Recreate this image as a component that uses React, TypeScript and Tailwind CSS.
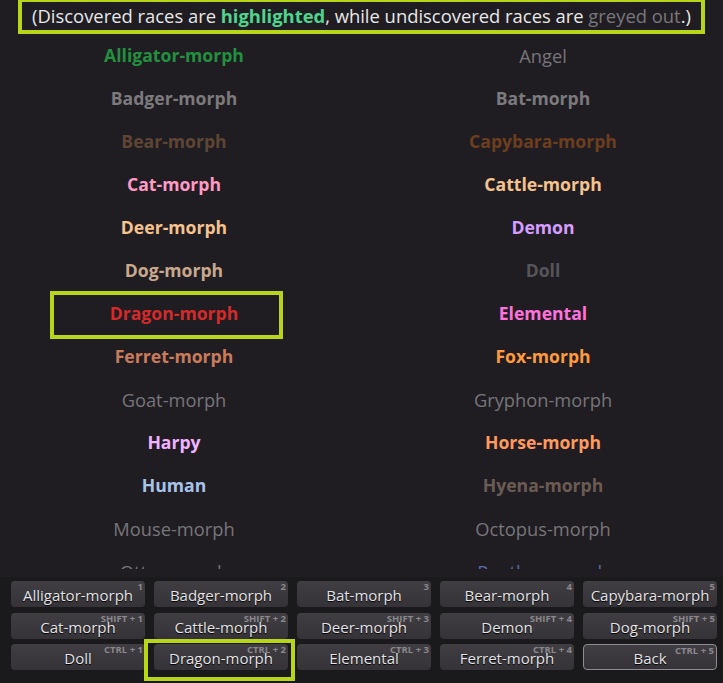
import React from "react";

type Race = { name: string; color: string; bold: boolean };

const left: Race[] = [
  { name: "Alligator-morph", color: "text-[#22903f]", bold: true },
  { name: "Badger-morph", color: "text-[#7c7a7c]", bold: true },
  { name: "Bear-morph", color: "text-[#5e4534]", bold: true },
  { name: "Cat-morph", color: "text-[#ff9ac4]", bold: true },
  { name: "Deer-morph", color: "text-[#f6c28e]", bold: true },
  { name: "Dog-morph", color: "text-[#c9a88d]", bold: true },
  { name: "Dragon-morph", color: "text-[#d42a2a]", bold: true },
  { name: "Ferret-morph", color: "text-[#c97b5b]", bold: true },
  { name: "Goat-morph", color: "text-[#777579]", bold: false },
  { name: "Harpy", color: "text-[#f2b2ff]", bold: true },
  { name: "Human", color: "text-[#a7c3ea]", bold: true },
  { name: "Mouse-morph", color: "text-[#777579]", bold: false },
  { name: "Otter-morph", color: "text-[#777579]", bold: false },
];

const right: Race[] = [
  { name: "Angel", color: "text-[#777579]", bold: false },
  { name: "Bat-morph", color: "text-[#7c7a7c]", bold: true },
  { name: "Capybara-morph", color: "text-[#6d3d1f]", bold: true },
  { name: "Cattle-morph", color: "text-[#f6c28e]", bold: true },
  { name: "Demon", color: "text-[#d79cff]", bold: true },
  { name: "Doll", color: "text-[#565458]", bold: true },
  { name: "Elemental", color: "text-[#ff72dc]", bold: true },
  { name: "Fox-morph", color: "text-[#ff9a3d]", bold: true },
  { name: "Gryphon-morph", color: "text-[#777579]", bold: false },
  { name: "Horse-morph", color: "text-[#ff9a5e]", bold: true },
  { name: "Hyena-morph", color: "text-[#6b5b52]", bold: true },
  { name: "Octopus-morph", color: "text-[#777579]", bold: false },
  { name: "Panther-morph", color: "text-[#5a6aa8]", bold: false },
];

const buttons: { label: string; key: string }[] = [
  { label: "Alligator-morph", key: "1" },
  { label: "Badger-morph", key: "2" },
  { label: "Bat-morph", key: "3" },
  { label: "Bear-morph", key: "4" },
  { label: "Capybara-morph", key: "5" },
  { label: "Cat-morph", key: "SHIFT + 1" },
  { label: "Cattle-morph", key: "SHIFT + 2" },
  { label: "Deer-morph", key: "SHIFT + 3" },
  { label: "Demon", key: "SHIFT + 4" },
  { label: "Dog-morph", key: "SHIFT + 5" },
  { label: "Doll", key: "CTRL + 1" },
  { label: "Dragon-morph", key: "CTRL + 2" },
  { label: "Elemental", key: "CTRL + 3" },
  { label: "Ferret-morph", key: "CTRL + 4" },
  { label: "Back", key: "CTRL + 5" },
];

const RaceCell = ({ race }: { race: Race }) => (
  <div className="h-[43px] flex items-center justify-center">
    <span className={`${race.bold ? "text-[17.6px] font-bold" : "text-[18.3px] font-normal"} ${race.color}`}>
      {race.name}
    </span>
  </div>
);

const App = () => {
  const rows = left.map((l, i) => [l, right[i]]);
  return (
    <div
      className="w-[723px] h-[683px] bg-[#1f1d22] flex flex-col overflow-hidden"
      style={{ fontFamily: '"Open Sans", "Liberation Sans", sans-serif' }}
    >
      <div className="relative h-[569px] overflow-hidden">
        <div className="mx-[18px] mt-[-2px] h-[36px] border-4 border-[#b7d61a] flex items-center justify-center">
          <p className="text-[18.4px] text-[#e8e8e8] whitespace-nowrap">
            (Discovered races are <span className="font-bold text-[#4fd58d]">highlighted</span>, while undiscovered races are{" "}
            <span className="text-[#79777b]">greyed out</span>.)
          </p>
        </div>
        <div className="grid grid-cols-[348px_390px]">
          {rows.map(([l, r]) => (
            <React.Fragment key={l.name}>
              <RaceCell race={l} />
              <RaceCell race={r} />
            </React.Fragment>
          ))}
        </div>
        <div className="absolute left-[50px] top-[291px] w-[233px] h-[48px] border-4 border-[#b7d61a]" />
      </div>
      <div className="h-[8px]" />
      <div className="relative flex-1 bg-[#1a191c] pt-[4px] pl-[11px]">
        <div className="grid grid-cols-[repeat(5,134px)] gap-x-[9px] gap-y-[5.5px]">
          {buttons.map((b) => (
            <div
              key={b.label}
              className={`relative h-[26px] rounded-[4px] flex items-center justify-center bg-gradient-to-b from-[#403e42] to-[#353337] ${
                b.label === "Back" ? "border border-[#8d8b8f]" : ""
              }`}
            >
              <span className="absolute right-[2px] top-[1px] text-[9.5px] leading-none font-bold text-[#8a888c]">
                {b.key}
              </span>
              <span className="relative text-[15px] leading-none text-[#e4e2e6] pt-[3px] [text-shadow:0_1px_1px_#000]">
                {b.label}
              </span>
            </div>
          ))}
        </div>
        <div className="absolute left-[144px] top-[62px] w-[151px] h-[42px] border-4 border-[#b7d61a]" />
      </div>
    </div>
  );
};

export default App;
